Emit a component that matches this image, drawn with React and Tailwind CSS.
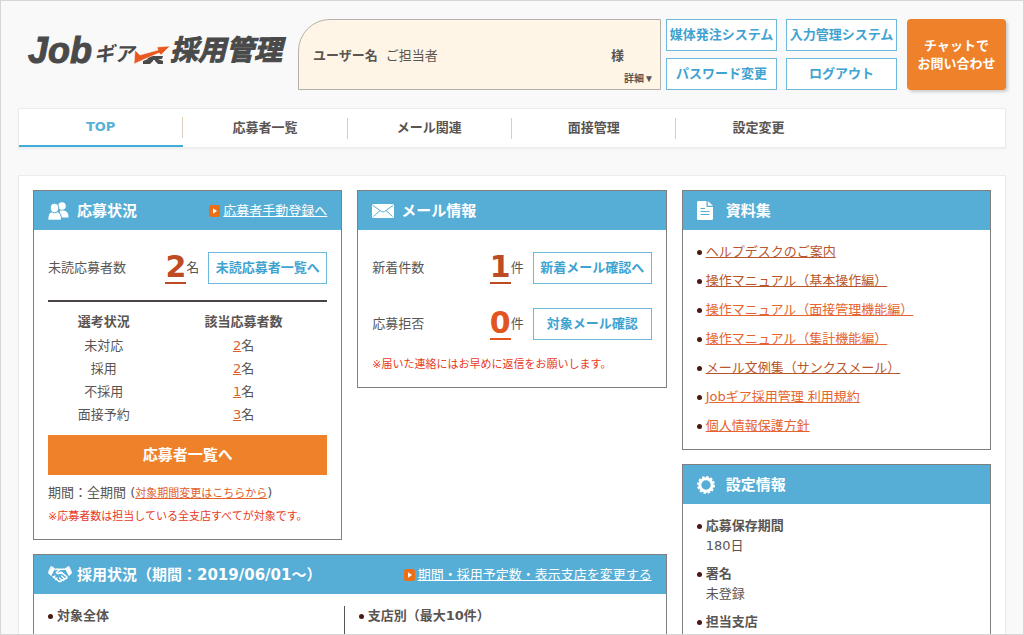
const tabs = ["TOP", "応募者一覧", "メール関連", "面接管理", "設定変更"];

const headerLinks = ["媒体発注システム", "入力管理システム", "パスワード変更", "ログアウト"];

const statuses = [
  { label: "未対応", count: 2 },
  { label: "採用", count: 2 },
  { label: "不採用", count: 1 },
  { label: "面接予約", count: 3 },
];

const documents = [
  { title: "ヘルプデスクのご案内", visited: true },
  { title: "操作マニュアル（基本操作編）", visited: true },
  { title: "操作マニュアル（面接管理機能編）", visited: false },
  { title: "操作マニュアル（集計機能編）", visited: false },
  { title: "メール文例集（サンクスメール）", visited: true },
  { title: "Jobギア採用管理 利用規約", visited: false },
  { title: "個人情報保護方針", visited: false },
];

const settings = [
  { name: "応募保存期間", value: "180日" },
  { name: "署名", value: "未登録" },
  { name: "担当支店", value: "" },
];

function UsersIcon() {
  return (
    <svg width="21" height="18" viewBox="0 0 21 18" fill="#fff">
      <circle cx="14" cy="4" r="3.800" />
      <path d="M12 8.500H16Q20.500 9 20.500 15.500H12Z" />
      <g stroke="#56add5" strokeWidth="1">
        <path d="M4 9.800H9.500Q13.500 10.500 13.500 18.200H-0.200Q-0.200 10.500 4 9.800Z" />
        <ellipse cx="6.500" cy="6" rx="4.300" ry="4.800" />
      </g>
    </svg>
  );
}

function MailIcon() {
  return (
    <svg width="22" height="14" viewBox="0 0 22 14" fill="none">
      <rect width="22" height="14" rx="1.500" fill="#fff" />
      <path d="M1 1.500l8.500 6q1.500 1 3 0L21 1.500M1.500 12.500l6.500-6M20.500 12.500l-6.500-6" stroke="#56add5" strokeWidth="1" />
    </svg>
  );
}

function DocumentIcon() {
  return (
    <svg width="16" height="19" viewBox="0 0 16 19" fill="none">
      <path d="M1.500 0H9.500V6H16V17.500Q16 19 14.500 19H1.500Q0 19 0 17.500V1.500Q0 0 1.500 0Z" fill="#fff" />
      <path d="M10.800 0L16 4.800H10.800Z" fill="#fff" />
      <path d="M3.500 7.500H8M3.500 10.500H12.500M3.500 13.500H12.500" stroke="#56add5" strokeWidth="1.200" />
    </svg>
  );
}

function GearIcon() {
  return (
    <svg width="18" height="18" viewBox="0 0 18 18" fill="none" stroke="#fff">
      <circle cx="9" cy="9" r="6.200" strokeWidth="3" />
      <circle cx="9" cy="9" r="8" strokeWidth="2" strokeDasharray="2.400 1.789" />
    </svg>
  );
}

function HandshakeIcon() {
  return (
    <svg width="24" height="17" viewBox="0 0 24 17" fill="none" stroke="#fff" strokeLinecap="round" strokeLinejoin="round">
      <path d="M3.500 0.500L6.500 2.500L3 9.500L0.500 7Z M20.500 0.500L17.500 2.500L21 9.500L23.500 7Z" fill="#fff" strokeWidth="1" />
      <path d="M7.500 3.500L10 3M17 3.200L12 3.200L8.500 6.500Q10 8.800 13 6.200L19 11Q18.500 13.500 16.500 12.500Q16 14.800 14 14Q12.500 16.500 10.500 15L5 10.500" strokeWidth="1.600" />
      <path d="M13.500 10L16 12.200M11.500 12L13.500 13.800M5.500 11.500L7 10M7.500 13.500L9 12" strokeWidth="1.300" />
    </svg>
  );
}

function PlayBadge() {
  return (
    <svg width="11" height="12" viewBox="0 0 11 12" className="shrink-0">
      <rect width="11" height="12" rx="2.500" fill="#ec6f17" />
      <path d="M4 3.200L8 6L4 8.800Z" fill="#fff" />
    </svg>
  );
}

function Logo() {
  return (
    <h1 className="flex h-8 w-[256px] shrink-0 items-end font-bold italic text-[#4a4a4a]">
      <span className="text-[36px] leading-8 [-webkit-text-stroke:1px_#4a4a4a]">Job</span>
      <span className="ml-0.5 text-[20px] leading-[26px]">ギア</span>
      <svg width="38" height="22" viewBox="0 0 38 22" className="-ml-0.5 shrink-0">
        <path d="M14 11H31L30 14H26L31 16V19H26L22 15L18 19H11V16L16 14Z" fill="#4a4a4a" />
        <path d="M22 15V19" stroke="#f9f9f9" strokeWidth="1.500" />
        <path d="M3 5L8 10L26 5L25 2L38 1L29 10L27 8L13 14L2 19Z" fill="#e9581e" stroke="#f9f9f9" strokeWidth="0.600" />
      </svg>
      <span className="whitespace-nowrap text-[28px] leading-8 [-webkit-text-stroke:1px_#4a4a4a]">採用管理</span>
    </h1>
  );
}

function OutlineButton({ children, className = "" }) {
  return (
    <button
      type="button"
      className={`flex items-center justify-center whitespace-nowrap border border-[#6cb9dd] bg-white text-[13px] font-bold leading-5 text-[#3fa3d1] ${className}`}
    >
      {children}
    </button>
  );
}

function Panel({ icon, title, link, className = "", children }) {
  return (
    <section className={`border border-[#7f7f7f] bg-white ${className}`}>
      <header className="flex h-[39px] items-center bg-[#56add5] px-[14px] text-white">
        <span className="flex w-[29px] shrink-0 items-center">{icon}</span>
        <h2 className="whitespace-nowrap text-[15px] font-bold leading-5">{title}</h2>
        {link && (
          <a href="#" className="ml-auto flex items-center gap-[3px] whitespace-nowrap text-[13px] leading-5">
            <PlayBadge />
            <span className="underline">{link}</span>
          </a>
        )}
      </header>
      {children}
    </section>
  );
}

function CountRow({ label, count, unit, action, color }) {
  return (
    <div className="flex h-8 items-center">
      <span>{label}</span>
      <a
        href="#"
        className={`ml-auto border-b-2 border-current font-['DejaVu_Sans'] text-[30px] font-bold leading-[30px] ${color}`}
      >
        {count}
      </a>
      <span className="mr-[9px]">{unit}</span>
      <OutlineButton className="h-8 w-[119px]">{action}</OutlineButton>
    </div>
  );
}

function Bullet() {
  return <span className="size-[5px] shrink-0 rounded-full bg-[#4a1a10]" />;
}

export default function App() {
  return (
    <div className="h-screen overflow-hidden border border-[#d6d6d6] bg-[#f9f9f9] px-[17px] pt-[18px] font-['DejaVu_Sans','Noto_Sans_CJK_JP',sans-serif] text-[13px] leading-5 text-[#5a5552]">
      <div className="flex h-[71px] font-['Liberation_Sans','Noto_Sans_CJK_JP',sans-serif]">
        <div className="flex w-[280px] shrink-0 items-start pl-[10px] pt-4">
          <Logo />
        </div>
        <div className="flex min-w-0 flex-1 flex-col justify-between rounded-tl-[32px] border border-[#b5b1aa] bg-[#fff5e6] px-[14px] pb-0.5 pt-[26px]">
          <div className="flex gap-2 pr-[22px]">
            <span className="font-bold">ユーザー名</span>
            <span>ご担当者</span>
            <span className="ml-auto font-bold">様</span>
          </div>
          <button type="button" className="-mr-2 self-end text-[10px] font-bold leading-4">詳細▼</button>
        </div>
        <div className="ml-[5px] grid grid-cols-2 gap-x-[9px] gap-y-[7px]">
          {headerLinks.map((label) => (
            <OutlineButton key={label} className="w-[111px]">{label}</OutlineButton>
          ))}
        </div>
        <button
          type="button"
          className="ml-[10px] w-[99px] shrink-0 rounded bg-[#ee8129] text-[13px] font-bold leading-[18px] text-white shadow-[2px_2px_3px_#cccccc]"
        >
          チャットで
          <br />
          お問い合わせ
        </button>
      </div>

      <nav className="mt-[18px] flex h-10 items-stretch border border-[#ececec] bg-white shadow-xs">
        {tabs.map((tab, i) => (
          <a
            key={tab}
            href="#"
            className={
              i === 0
                ? "flex w-1/6 items-center border-b-2 border-[#40add7] font-bold text-[#56b0d8]"
                : "flex w-1/6 items-center font-bold"
            }
          >
            <span className="flex-1 text-center">{tab}</span>
            {i < tabs.length - 1 && <span className="h-[21px] w-px bg-[#dfcdb9]" />}
          </a>
        ))}
      </nav>

      <main className="mt-[27px] grid grid-cols-3 items-start gap-x-[15px] border border-[#ececec] bg-white p-[14px] shadow-xs">
        <div className="col-span-2 grid grid-cols-2 items-start gap-x-[15px] gap-y-[14px]">
          <Panel icon={<UsersIcon />} title="応募状況" link="応募者手動登録へ">
            <div className="px-[14px] pb-3 pt-[22px]">
              <CountRow label="未読応募者数" count={2} unit="名" action="未読応募者一覧へ" color="text-[#bd4b23]" />
              <table className="mt-4 w-full border-t-2 border-[#4a4442] text-center">
                <thead>
                  <tr>
                    <th className="h-[33px] w-2/5 pt-2">選考状況</th>
                    <th className="pt-2">該当応募者数</th>
                  </tr>
                </thead>
                <tbody>
                  {statuses.map((status) => (
                    <tr key={status.label} className="h-[23px]">
                      <td>{status.label}</td>
                      <td>
                        <a href="#" className="text-[#d9622f] underline">{status.count}</a>名
                      </td>
                    </tr>
                  ))}
                </tbody>
              </table>
              <button type="button" className="mt-[9px] h-10 w-full bg-[#ee8129] text-[15px] font-bold text-white">
                応募者一覧へ
              </button>
              <p className="mt-2">
                期間：全期間 (<a href="#" className="text-[11px] text-[#e0602a] underline">対象期間変更はこちらから</a>)
              </p>
              <p className="mt-[3px] whitespace-nowrap text-[11px] text-[#e8391e]">
                ※応募者数は担当している全支店すべてが対象です。
              </p>
            </div>
          </Panel>

          <Panel icon={<MailIcon />} title="メール情報">
            <div className="px-[14px] pb-3 pt-[22px]">
              <CountRow label="新着件数" count={1} unit="件" action="新着メール確認へ" color="text-[#bd4b23]" />
              <div className="mt-6">
                <CountRow label="応募拒否" count={0} unit="件" action="対象メール確認" color="text-[#e25521]" />
              </div>
              <p className="mt-[15px] whitespace-nowrap text-[11px] text-[#e8391e]">
                ※届いた連絡にはお早めに返信をお願いします。
              </p>
            </div>
          </Panel>

          <Panel
            icon={<HandshakeIcon />}
            title="採用状況（期間：2019/06/01〜）"
            link="期間・採用予定数・表示支店を変更する"
            className="col-span-2"
          >
            <div className="flex px-[14px] py-3 font-bold">
              <div className="flex h-40 w-[49%] items-start gap-1">
                <span className="flex h-5 items-center"><Bullet /></span>
                <h3>対象全体</h3>
              </div>
              <div className="flex h-40 flex-1 items-start gap-1 border-l border-[#5a5552] pl-[14px]">
                <span className="flex h-5 items-center"><Bullet /></span>
                <h3>支店別（最大10件）</h3>
              </div>
            </div>
          </Panel>
        </div>

        <div className="grid gap-[14px]">
          <Panel icon={<DocumentIcon />} title="資料集">
            <ul className="flex flex-col gap-[9px] px-[14px] pb-[13px] pt-3">
              {documents.map((doc) => (
                <li key={doc.title} className="flex items-center gap-1">
                  <Bullet />
                  <a
                    href="#"
                    className={doc.visited ? "whitespace-nowrap text-[#b9562b] underline" : "whitespace-nowrap text-[#e5642f] underline"}
                  >
                    {doc.title}
                  </a>
                </li>
              ))}
            </ul>
          </Panel>

          <Panel icon={<GearIcon />} title="設定情報">
            <dl className="px-[14px] pt-3">
              {settings.map((item) => (
                <div key={item.name} className="mb-2">
                  <dt className="flex items-center gap-1 font-bold">
                    <Bullet />
                    {item.name}
                  </dt>
                  {item.value && <dd className="pl-[9px]">{item.value}</dd>}
                </div>
              ))}
            </dl>
          </Panel>
        </div>
      </main>
    </div>
  );
}
